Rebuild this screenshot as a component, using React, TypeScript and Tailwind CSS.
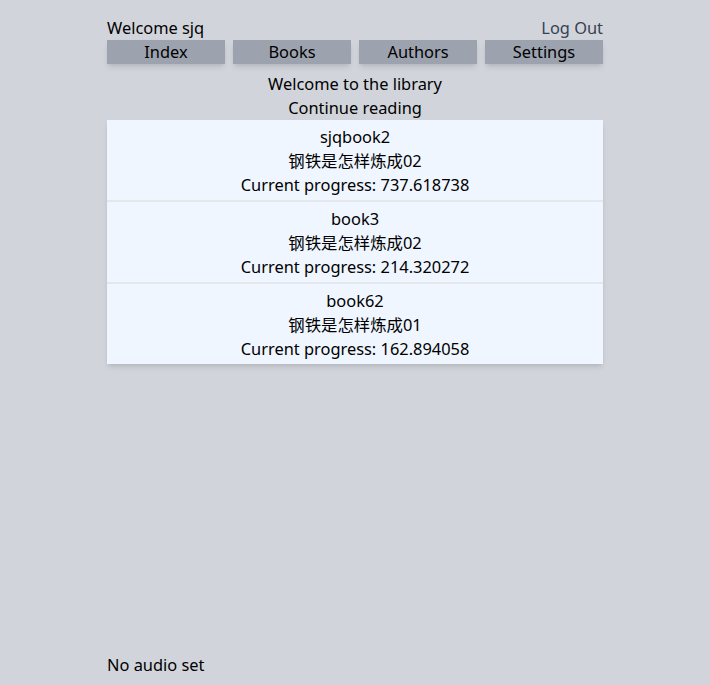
const books = [
  { name: "sjqbook2", title: "钢铁是怎样炼成02", progress: "737.618738" },
  { name: "book3", title: "钢铁是怎样炼成02", progress: "214.320272" },
  { name: "book62", title: "钢铁是怎样炼成01", progress: "162.894058" },
];

const navItems = ["Index", "Books", "Authors", "Settings"];

export default function App() {
  return (
    <div
      className="flex min-h-screen flex-col bg-[#d1d5db] text-[16.4px] leading-6 text-black"
      style={{ fontFamily: '"Noto Sans", "Noto Sans CJK SC", sans-serif' }}
    >
      <div className="mx-auto w-[496px] flex-1 pt-4">
        <div className="flex items-center justify-between">
          <span>Welcome sjq</span>
          <button type="button" className="text-[#374151]">
            Log Out
          </button>
        </div>

        <nav className="grid grid-cols-4 gap-2">
          {navItems.map((item) => (
            <button
              key={item}
              type="button"
              className="h-6 bg-[#9ca3af] shadow-md"
            >
              {item}
            </button>
          ))}
        </nav>

        <div className="mt-2 text-center">
          <p>Welcome to the library</p>
          <p>Continue reading</p>
        </div>

        <div className="flex flex-col gap-0.5 bg-[#e5e7eb] shadow-md">
          {books.map((book) => (
            <div key={book.name} className="bg-[#eff6ff] pt-[5px] pb-[3px] text-center">
              <p>{book.name}</p>
              <p>{book.title}</p>
              <p>Current progress: {book.progress}</p>
            </div>
          ))}
        </div>
      </div>

      <div className="mx-auto w-[496px] pb-2">No audio set</div>
    </div>
  );
}
